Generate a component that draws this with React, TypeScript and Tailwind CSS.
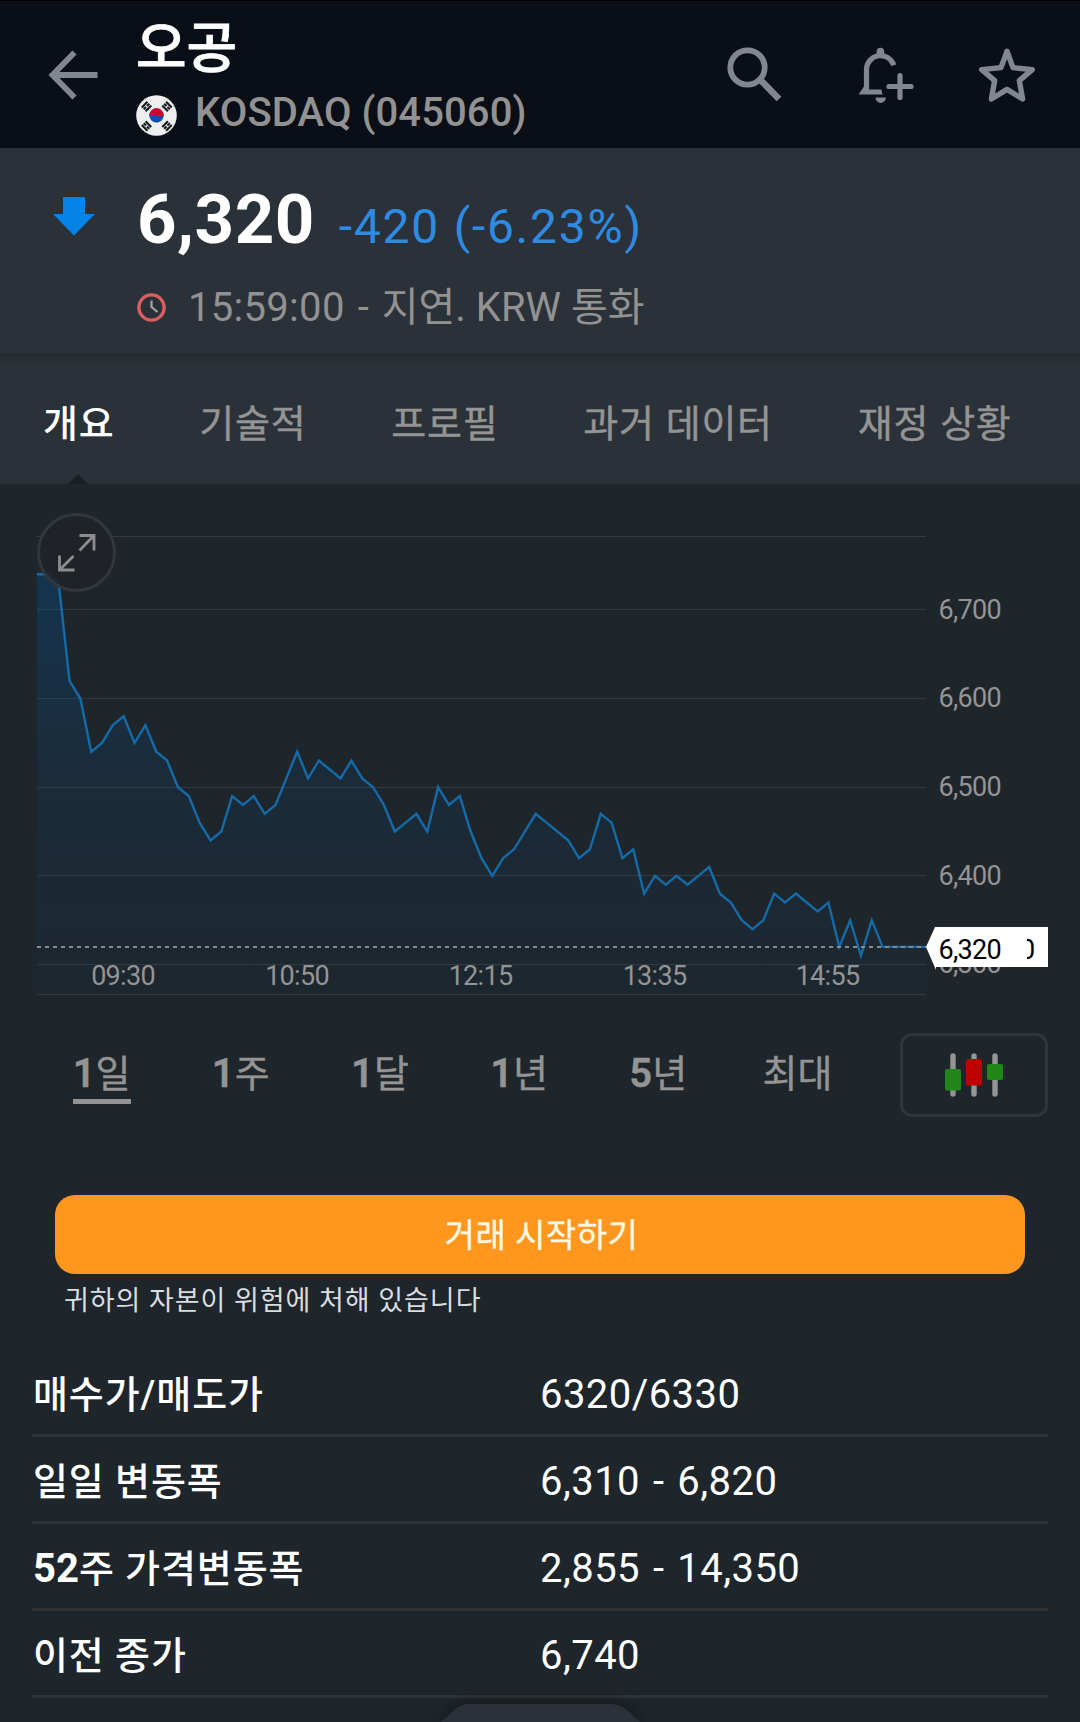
import { useState } from "react";
import clsx from "clsx";

const STOCK = {
  name: "오공",
  market: "KOSDAQ (045060)",
  price: "6,320",
  change: "-420 (-6.23%)",
  time: "15:59:00",
  status: "지연. KRW 통화",
};

const TABS = [
  { label: "개요", className: "ml-[43px]" },
  { label: "기술적", className: "ml-[85px]" },
  { label: "프로필", className: "ml-[85px]" },
  { label: "과거 데이터", className: "ml-[85px]" },
  { label: "재정 상황", className: "ml-[85px]" },
];

const RANGES = [
  { count: "1", unit: "일" },
  { count: "1", unit: "주" },
  { count: "1", unit: "달" },
  { count: "1", unit: "년" },
  { count: "5", unit: "년" },
  { count: "", unit: "최대" },
];

const QUOTE_ROWS = [
  { label: "매수가/매도가", value: "6320/6330" },
  { label: "일일 변동폭", value: "6,310 - 6,820" },
  { prefix: "52", label: "주 가격변동폭", value: "2,855 - 14,350" },
  { label: "이전 종가", value: "6,740" },
];

// 5분 간격 체결가
const PRICES = [
  6740, 6740, 6730, 6620, 6600, 6540, 6550, 6570, 6580, 6550, 6570, 6540, 6530,
  6500, 6490, 6460, 6440, 6450, 6490, 6480, 6490, 6470, 6480, 6510, 6540, 6510,
  6530, 6520, 6510, 6530, 6510, 6500, 6480, 6450, 6460, 6470, 6450, 6500, 6480,
  6490, 6450, 6420, 6400, 6420, 6430, 6450, 6470, 6460, 6450, 6440, 6420, 6430,
  6470, 6460, 6420, 6430, 6380, 6400, 6390, 6400, 6390, 6400, 6410, 6380, 6370,
  6350, 6340, 6350, 6380, 6370, 6380, 6370, 6360, 6370, 6320, 6350, 6310, 6350,
  6320, 6320, 6320, 6320, 6320,
];

const TIME_LABELS = [
  { x: 123, text: "09:30" },
  { x: 297, text: "10:50" },
  { x: 480.5, text: "12:15" },
  { x: 654.5, text: "13:35" },
  { x: 827.5, text: "14:55" },
];

const PRICE_LABELS = [6700, 6600, 6500, 6400, 6300];

const CHART_LEFT = 37;
const CHART_RIGHT = 926;
const CHART_BOTTOM = 510;

const toX = (index: number) =>
  CHART_LEFT + (index * (CHART_RIGHT - CHART_LEFT)) / (PRICES.length - 1);
const toY = (price: number) => 214.5 + (6600 - price) * 0.887;

function BackIcon() {
  return (
    <svg
      className="h-[50px] w-[50px]"
      viewBox="0 0 50 50"
      fill="none"
      stroke="#82868e"
      strokeWidth="5.8"
    >
      <path d="M26.5 2.5 4.5 25l22 22.5M5 25h44.5" />
    </svg>
  );
}

function SearchIcon() {
  return (
    <svg
      className="h-[58px] w-[58px]"
      viewBox="0 0 58 58"
      fill="none"
      stroke="#82868e"
    >
      <circle cx="21.5" cy="21.5" r="17.2" strokeWidth="5.8" />
      <path d="M35.5 35 53 53" strokeWidth="6.6" />
    </svg>
  );
}

function BellPlusIcon() {
  return (
    <svg
      className="h-[58px] w-[58px]"
      viewBox="0 0 58 58"
      fill="none"
      stroke="#82868e"
      strokeWidth="5.2"
    >
      <path d="M8.5 44V23.5A14 14 0 0 1 35.8 19.2" />
      <path d="M.5 48.500 6 40.500h5V43.500H23.500l1 5Z" fill="#82868e" stroke="none" />
      <path
        d="M18.6 9V5.500a3.800 3.800 0 0 1 7.600 0v3.500ZM17.500 51.500h10.400a5.200 5.400 0 0 1-10.400 0Z"
        fill="#82868e"
        stroke="none"
      />
      <path d="M31 40.500h22M42 29.500v22" strokeLinecap="round" />
    </svg>
  );
}

function StarIcon() {
  return (
    <svg
      className="h-[58px] w-[58px]"
      viewBox="0 0 58 58"
      fill="none"
      stroke="#82868e"
      strokeWidth="5.4"
      strokeLinejoin="round"
    >
      <path d="M29 5.2 35 21.6 54.3 23.6 41.3 34.6 44.6 53 29 43.4 13.4 53 16.7 34.6 3.7 23.6 23 21.6Z" />
    </svg>
  );
}

function KoreaFlag() {
  const bars = [
    { x: 31, y: 11.5, rotate: 45 },
    { x: 10.5, y: 31, rotate: 45 },
    { x: 10.5, y: 11.5, rotate: -45 },
    { x: 31, y: 31, rotate: -45 },
  ];

  return (
    <svg className="h-[41px] w-[41px]" viewBox="0 0 41 41">
      <circle cx="20.5" cy="20.5" r="20.3" fill="#efefef" />
      <circle cx="20.5" cy="20.5" r="7.2" fill="#0f4fae" />
      <path
        d="M13.3 20.5a7.2 7.2 0 0 1 14.4 0c-2.4 1.6-4.6 1-7.2 0s-4.8-1-7.2 0Z"
        fill="#d80027"
      />
      {bars.map(({ x, y, rotate }) => (
        <g
          key={`${x}-${y}`}
          transform={`translate(${x} ${y}) rotate(${rotate})`}
          stroke="#16181c"
          strokeWidth="2.1"
        >
          <path d="M-4-2.7h8M-4 0h3.4M.6 0H4M-4 2.7h8" />
        </g>
      ))}
    </svg>
  );
}

function ClockIcon() {
  return (
    <svg
      className="h-[30px] w-[30px]"
      viewBox="0 0 30 30"
      fill="none"
      strokeWidth="3.4"
    >
      <circle cx="14.5" cy="14.5" r="12.6" stroke="#dc5f60" />
      <path d="M14.5 7.5v6.500l6 5" stroke="#a5a5a5" strokeWidth="2.2" />
    </svg>
  );
}

function Header() {
  return (
    <header className="flex h-[148px] border-t border-black bg-[#0a0f17]">
      <button className="mt-[49px] ml-12 h-[50px]">
        <BackIcon />
      </button>
      <div className="mt-[17px] ml-[38px] flex-1">
        <h1 className="text-[55px] leading-[60px] font-medium text-white [-webkit-text-stroke:0.8px_white]">
          {STOCK.name}
        </h1>
        <div className="mt-[11px] flex items-center">
          <div className="mt-[5px]">
            <KoreaFlag />
          </div>
          <p className="ml-[18px] text-[40px] leading-[48px] font-medium tracking-[0.1px] text-[#929292]">
            {STOCK.market}
          </p>
        </div>
      </div>
      <div className="mt-[45px] mr-11 flex">
        <SearchIcon />
        <div className="ml-[74px]">
          <BellPlusIcon />
        </div>
        <div className="ml-[62px]">
          <StarIcon />
        </div>
      </div>
    </header>
  );
}

function PriceSummary() {
  return (
    <section className="h-[205px] bg-[#2b3138] pt-8">
      <div className="flex h-20 items-start">
        <svg
          className="mt-[17px] ml-[53px] h-[39px] w-[42px]"
          viewBox="0 0 42 39"
          fill="#0683e6"
        >
          <path d="M10 0h22v17h10L21 38.5 0 17h10Z" />
        </svg>
        <div className="ml-[42px] flex items-baseline leading-[80px]">
          <strong className="text-[69px] font-bold tracking-[0.5px] text-white">
            {STOCK.price}
          </strong>
          <span className="ml-6 text-[48px] tracking-[1.75px] text-[#2f8be2]">
            {STOCK.change}
          </span>
        </div>
      </div>
      <div className="mt-[23px] ml-[137px] flex items-center">
        <ClockIcon />
        <p className="mt-px ml-[21px] flex text-[40px] leading-[48px] text-[#929292]">
          <span className="tracking-[0.3px]">{STOCK.time}</span>
          <span className="mx-[13px]">-</span>
          <span>{STOCK.status}</span>
        </p>
      </div>
    </section>
  );
}

function TabBar() {
  const [current, setCurrent] = useState(TABS[0].label);

  return (
    <nav className="relative h-[131px] bg-[#2b3138] bg-linear-to-b from-[#262b30] to-[#2b3138] to-10%">
      <ul className="flex pt-[47px]">
        {TABS.map(({ label, className }) => (
          <li key={label} className={className}>
            <button
              onClick={() => setCurrent(label)}
              className={clsx(
                "text-[38px] leading-[48px] tracking-[0.7px] [word-spacing:1px] whitespace-nowrap",
                current === label
                  ? "font-medium text-white"
                  : "text-[#949494] [-webkit-text-stroke:0.4px_#949494]",
              )}
            >
              {label}
            </button>
          </li>
        ))}
      </ul>
      <svg
        className="absolute bottom-0 left-[68px] h-[10px] w-5"
        viewBox="0 0 20 10"
        fill="#1a1f25"
      >
        <path d="M10 0 20 10H0Z" />
      </svg>
    </nav>
  );
}

function PriceChart() {
  const line = PRICES.map((price, i) => `${toX(i)},${toY(price)}`).join(" ");
  const gridLines = [52.5, 125.5, 214.5, 303.5, 391.5, 480.5, 510.5];

  return (
    <div className="relative h-[536px]">
      <svg
        className="block h-[536px] w-[1080px]"
        viewBox="0 0 1080 536"
        fontSize="27"
      >
        <defs>
          <linearGradient id="area" x1="0" y1="0" x2="0" y2="1">
            <stop offset="0" stopColor="#0058a4" stopOpacity="0.3" />
            <stop offset="0.5" stopColor="#0058a4" stopOpacity="0.12" />
            <stop offset="1" stopColor="#0058a4" stopOpacity="0.03" />
          </linearGradient>
          <clipPath id="tag-rest">
            <rect x="1027" y="440" width="12" height="40" />
          </clipPath>
        </defs>
        <g stroke="#333b41">
          {gridLines.map((y) => (
            <path key={y} d={`M${CHART_LEFT} ${y}H${CHART_RIGHT}`} />
          ))}
        </g>
        <polygon
          points={`${CHART_LEFT},${CHART_BOTTOM} ${line} ${CHART_RIGHT},${CHART_BOTTOM}`}
          fill="url(#area)"
        />
        <polyline
          points={line}
          fill="none"
          stroke="#156ba8"
          strokeWidth="2.4"
        />
        <path
          d={`M${CHART_LEFT} 463H${CHART_RIGHT}`}
          stroke="#858b90"
          strokeWidth="2"
          strokeDasharray="4 4"
        />
        <g fill="#949494" letterSpacing="-0.7">
          {TIME_LABELS.map(({ x, text }) => (
            <text key={text} x={x} y="501" textAnchor="middle">
              {text}
            </text>
          ))}
          {PRICE_LABELS.map((price) => (
            <text key={price} x="938.5" y={toY(price) + 8.8}>
              {price.toLocaleString("en-US")}
            </text>
          ))}
        </g>
        <path d="M926 463 935 443H1048V483H936V486Z" fill="#fff" />
        <text x="938.5" y="475" fill="#000" letterSpacing="-0.7">
          6,320
        </text>
        <text x="1020" y="475" fill="#000" clipPath="url(#tag-rest)">
          0
        </text>
      </svg>
      <button className="absolute top-[29px] left-[37px] flex h-[79px] w-[79px] items-center justify-center rounded-full border-[3px] border-[#32363d] bg-[#1f2328]/90">
        <svg
          className="h-[38px] w-[38px]"
          viewBox="0 0 38 38"
          fill="none"
          stroke="#8d8d8d"
          strokeWidth="2.8"
        >
          <path d="M21.5 1.5H36V16.5M35.5 2l-14 14.5M1.5 21.5V36H16.5M2 35.5 15.5 22" />
        </svg>
      </button>
    </div>
  );
}

function RangeSelector() {
  const [selected, setSelected] = useState(0);

  return (
    <div className="mx-8 flex h-[97px] items-start pt-[13px]">
      <ul className="flex w-[835px]">
        {RANGES.map(({ count, unit }, i) => (
          <li key={count + unit} className="flex flex-1 justify-center">
            <button
              onClick={() => setSelected(i)}
              className={clsx(
                "h-[71px] border-b-[5px] pt-4 text-[38px] leading-[48px] whitespace-nowrap text-[#949494] [-webkit-text-stroke:0.4px_#949494]",
                selected === i ? "border-[#949494]" : "border-transparent",
              )}
            >
              <b className="text-[40px] font-semibold">{count}</b>
              {unit}
            </button>
          </li>
        ))}
      </ul>
      <button className="ml-[33px] flex h-[84px] w-[148px] items-center justify-center rounded-xl border-[3px] border-[#32353d]">
        <svg className="mr-px h-11 w-[58px]" viewBox="0 0 58 44">
          <path
            d="M8 3v38M29 3v38M50 3v38"
            stroke="#949494"
            strokeWidth="5.4"
            strokeLinecap="round"
          />
          <rect x="0" y="16" width="16" height="21.5" rx="2" fill="#218718" />
          <rect x="21" y="6" width="16" height="26.5" rx="2" fill="#c00000" />
          <rect x="42" y="11" width="16" height="16" rx="2" fill="#218718" />
        </svg>
      </button>
    </div>
  );
}

function TradeBanner() {
  return (
    <section className="pt-[78px]">
      <button className="mx-[55px] block h-[79px] w-[970px] rounded-[20px] bg-[#ff961e] pt-[3px] pl-[3px] text-[33px] tracking-[0.5px] text-[#fff8e4] [-webkit-text-stroke:0.4px_#fff8e4]">
        거래 시작하기
      </button>
      <p className="mt-[7px] ml-16 text-[27px] leading-10 tracking-[0.95px] text-[#d9dde0]">
        귀하의 자본이 위험에 처해 있습니다
      </p>
    </section>
  );
}

function QuoteTable() {
  return (
    <dl className="mx-8 mt-[29px] text-[40px] leading-[48px] text-white">
      {QUOTE_ROWS.map(({ prefix, label, value }) => (
        <div
          key={label}
          className="flex h-[87px] border-b-[3px] border-[#303234] pt-[21px]"
        >
          <dt className="w-[508px] pl-px text-[38px] font-medium tracking-[0.9px]">
            {prefix && (
              <b className="text-[40px] tracking-normal">{prefix}</b>
            )}
            {label}
          </dt>
          <dd className="tracking-[0.45px] [word-spacing:2.5px]">{value}</dd>
        </div>
      ))}
    </dl>
  );
}

export default function App() {
  return (
    <div className="relative h-[1722px] w-[1080px] overflow-hidden bg-[#1e252b] font-['Roboto','Noto_Sans_CJK_KR',sans-serif]">
      <Header />
      <PriceSummary />
      <TabBar />
      <PriceChart />
      <RangeSelector />
      <TradeBanner />
      <QuoteTable />
      <svg
        className="absolute bottom-0 left-[421px] h-[38px] w-[240px] drop-shadow-[0_0_8px_rgba(0,0,0,0.5)]"
        viewBox="0 0 240 38"
        fill="#2b3138"
      >
        <path d="M20 38 34 25Q41 20 48 20H190Q199 20 206 26L219 38Z" />
      </svg>
    </div>
  );
}
